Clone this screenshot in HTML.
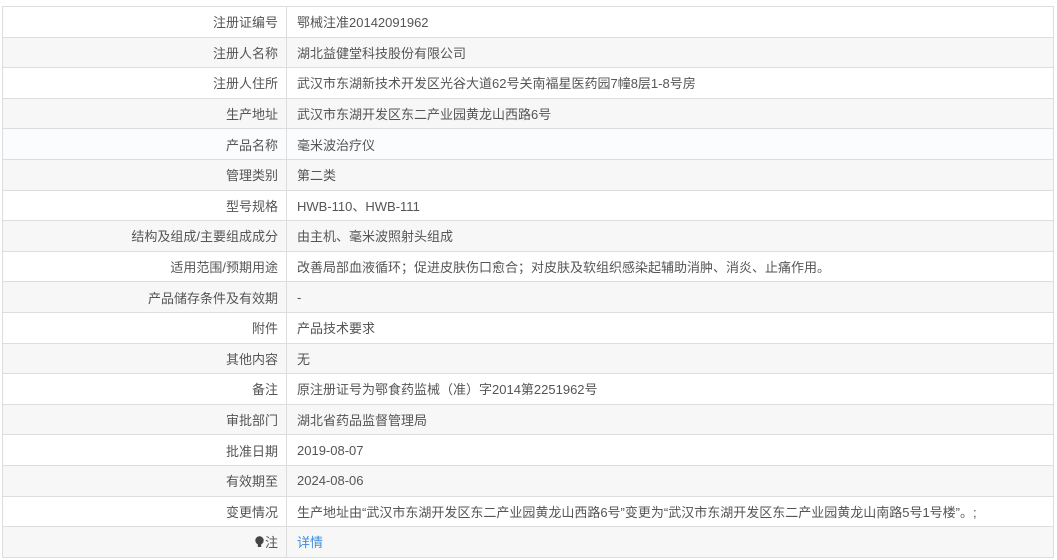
<!DOCTYPE html>
<html><head><meta charset="utf-8"><style>
body{margin:0;background:#fff;font-family:"Liberation Sans","Noto Sans CJK SC",sans-serif;font-size:13px;color:#555;}
.t{position:absolute;left:2px;top:6px;width:1050px;border-top:1px solid #ddd;border-left:1px solid #ddd;border-right:1px solid #ddd;}
.r{height:29.6px;border-bottom:1px solid #ddd;display:flex;align-items:center;}
.r:nth-child(even){background:#f7f7f7;}
.l{width:284px;box-sizing:border-box;padding-right:8px;text-align:right;border-right:1px solid #ddd;height:100%;display:flex;align-items:center;justify-content:flex-end;}
.v{padding-left:10px;}
a{color:#3c8dde;text-decoration:none;}
</style></head><body>
<div class="t">
<div class="r"><div class="l">注册证编号</div><div class="v">鄂械注准20142091962</div></div>
<div class="r"><div class="l">注册人名称</div><div class="v">湖北益健堂科技股份有限公司</div></div>
<div class="r"><div class="l">注册人住所</div><div class="v">武汉市东湖新技术开发区光谷大道62号关南福星医药园7幢8层1-8号房</div></div>
<div class="r"><div class="l">生产地址</div><div class="v">武汉市东湖开发区东二产业园黄龙山西路6号</div></div>
<div class="r" style="background:#fbfcfe"><div class="l">产品名称</div><div class="v">毫米波治疗仪</div></div>
<div class="r"><div class="l">管理类别</div><div class="v">第二类</div></div>
<div class="r"><div class="l">型号规格</div><div class="v">HWB-110、HWB-111</div></div>
<div class="r"><div class="l">结构及组成/主要组成成分</div><div class="v">由主机、毫米波照射头组成</div></div>
<div class="r"><div class="l">适用范围/预期用途</div><div class="v">改善局部血液循环；促进皮肤伤口愈合；对皮肤及软组织感染起辅助消肿、消炎、止痛作用。</div></div>
<div class="r"><div class="l">产品储存条件及有效期</div><div class="v">-</div></div>
<div class="r"><div class="l">附件</div><div class="v">产品技术要求</div></div>
<div class="r"><div class="l">其他内容</div><div class="v">无</div></div>
<div class="r"><div class="l">备注</div><div class="v">原注册证号为鄂食药监械（准）字2014第2251962号</div></div>
<div class="r"><div class="l">审批部门</div><div class="v">湖北省药品监督管理局</div></div>
<div class="r"><div class="l">批准日期</div><div class="v">2019-08-07</div></div>
<div class="r"><div class="l">有效期至</div><div class="v">2024-08-06</div></div>
<div class="r"><div class="l">变更情况</div><div class="v">生产地址由“武汉市东湖开发区东二产业园黄龙山西路6号”变更为“武汉市东湖开发区东二产业园黄龙山南路5号1号楼”。;</div></div>
<div class="r"><div class="l"><svg width="9" height="12" viewBox="0 0 9 12" style="margin-right:1px"><circle cx="4.5" cy="4.5" r="4.2" fill="#444"/><rect x="2.8" y="8" width="3.4" height="3" fill="#444"/></svg>注</div><div class="v"><a>详情</a></div></div>
</div>
</body></html>
